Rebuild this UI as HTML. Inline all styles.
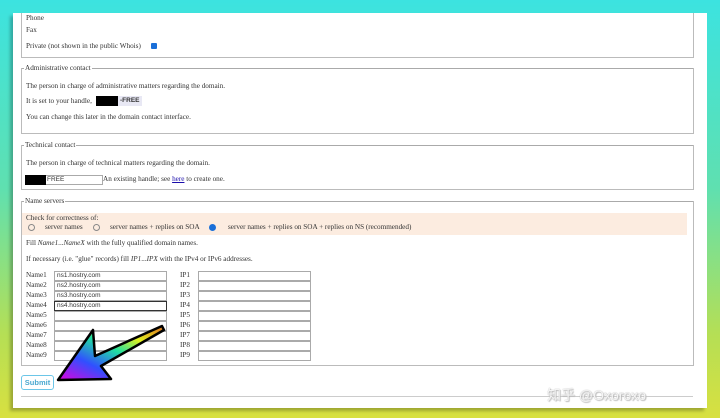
<!DOCTYPE html>
<html><head><style>
body{margin:0;width:720px;height:418px;overflow:hidden;background:linear-gradient(180deg,#3ce3e0 0%,#5fe0b0 45%,#b5df55 80%,#d8e040 100%);font-family:"Liberation Serif",serif;font-size:7.2px;color:#333;position:relative}
.panel{position:absolute;left:13px;top:13px;width:694px;height:395px;background:#fff;box-shadow:-3px 3px 3px rgba(0,0,0,.25)}
.a{position:absolute;white-space:nowrap}
.fs{position:absolute;left:21px;width:671px;border:1px solid #bbb;border-top:none}
.line{position:absolute;height:1px;background:#aaa}
.lg{position:absolute;background:#fff;padding:0 1px;left:24px}
.in{position:absolute;height:8px;border:1px solid #aaa;background:#fff;font-family:"Liberation Sans",sans-serif;font-size:6.5px;line-height:8px;padding-left:2px;box-sizing:content-box}
.rad{position:absolute;width:5px;height:5px;border:1px solid #888;border-radius:50%}
</style></head><body>
<div class="panel"></div>
<div class="fs" style="top:13px;height:44px"></div>
<div class="a" style="left:26px;top:14px">Phone</div>
<div class="a" style="left:26px;top:26px">Fax</div>
<div class="a" style="left:26px;top:42px">Private (not shown in the public Whois)</div>
<div class="a" style="left:151px;top:43px;width:6px;height:6px;background:#1a6fd8;border-radius:1px"></div>

<div class="line" style="left:21px;top:68px;width:672px"></div>
<div class="fs" style="top:68px;height:65px"></div>
<div class="lg" style="top:64px">Administrative contact</div>
<div class="a" style="left:26px;top:82px">The person in charge of administrative matters regarding the domain.</div>
<div class="a" style="left:26px;top:97px">It is set to your handle, </div>
<div class="a" style="left:96px;top:96px;width:22px;height:10px;background:#000"></div>
<div class="a" style="left:118px;top:96px;height:10px;background:#e8e8f4;font-family:'Liberation Sans',sans-serif;font-weight:bold;font-size:6.5px;line-height:10px;padding:0 2px;color:#333">-FREE</div>
<div class="a" style="left:26px;top:113px">You can change this later in the domain contact interface.</div>

<div class="line" style="left:21px;top:145px;width:672px"></div>
<div class="fs" style="top:145px;height:44px"></div>
<div class="lg" style="top:141px">Technical contact</div>
<div class="a" style="left:26px;top:159px">The person in charge of technical matters regarding the domain.</div>
<div class="in" style="left:25px;top:175px;width:74px">&nbsp;</div>
<div class="a" style="left:25px;top:175px;width:21px;height:10px;background:#000"></div>
<div class="a" style="left:47px;top:175px;font-family:'Liberation Sans',sans-serif;font-size:6.5px;line-height:10px">FREE</div>
<div class="a" style="left:103px;top:175px">An existing handle; see <span style="color:#1a0dab;text-decoration:underline">here</span> to create one.</div>

<div class="line" style="left:21px;top:201px;width:672px"></div>
<div class="fs" style="top:201px;height:164px"></div>
<div class="lg" style="top:197px">Name servers</div>
<div class="a" style="left:22px;top:213px;width:665px;height:22px;background:#fcece0"></div>
<div class="a" style="left:26px;top:214px">Check for correctness of:</div>
<div class="rad" style="left:28px;top:224px"></div>
<div class="a" style="left:45px;top:223px">server names</div>
<div class="rad" style="left:93px;top:224px"></div>
<div class="a" style="left:110px;top:223px">server names + replies on SOA</div>
<div class="rad" style="left:209px;top:224px;background:#1a6fd8;border-color:#1a6fd8"></div>
<div class="a" style="left:228px;top:223px">server names + replies on SOA + replies on NS (recommended)</div>
<div class="a" style="left:26px;top:239px">Fill <i>Name1</i>...<i>NameX</i> with the fully qualified domain names.</div>
<div class="a" style="left:26px;top:255px">If necessary (i.e. "glue" records) fill <i>IP1</i>...<i>IPX</i> with the IPv4 or IPv6 addresses.</div>

<div id="rows"></div>
<script>
var h='',v=['ns1.hostry.com','ns2.hostry.com','ns3.hostry.com','ns4.hostry.com','','','','',''];
for(var i=0;i<9;i++){var y=271+i*10;
h+='<div class="a" style="left:26px;top:'+y+'px">Name'+(i+1)+'</div>';
h+='<div class="in" style="left:54px;top:'+(y+0)+'px;width:109px;'+(i==3?'border-color:#333':'')+'">'+v[i]+'</div>';
h+='<div class="a" style="left:180px;top:'+y+'px">IP'+(i+1)+'</div>';
h+='<div class="in" style="left:198px;top:'+y+'px;width:109px"></div>';}
document.getElementById('rows').innerHTML=h;
</script>

<svg class="a" style="left:55px;top:322px" width="115" height="62" viewBox="0 0 115 62">
<defs><linearGradient id="g" x1="0" y1="1" x2="1" y2="0"><stop offset="0" stop-color="#e000e0"/><stop offset=".3" stop-color="#3050ff"/><stop offset=".55" stop-color="#20e0a0"/><stop offset=".75" stop-color="#e0f020"/><stop offset="1" stop-color="#e07020"/></linearGradient></defs>
<path d="M3 58 L38 8 L40 34 L107 4 L109 8 L46 44 L56 57 Z" fill="url(#g)" stroke="#000" stroke-width="2.5" stroke-linejoin="round"/>
</svg>

<div class="a" style="left:21px;top:375px;width:31px;height:13px;border:1.5px solid #6cc6e8;border-radius:3px;font-family:'Liberation Sans',sans-serif;font-size:7.5px;font-weight:bold;color:#4aa8d0;line-height:13px;text-align:center">Submit</div>
<div class="line" style="left:21px;top:396px;width:672px;background:#ccc"></div>
<div class="a" style="left:547px;top:385px;font-family:'Liberation Sans','Noto Sans CJK SC',sans-serif;font-size:14px;color:#f4f4f4;text-shadow:0 0 1px #aaa,1px 1px 1px #bbb">知乎 @Oxoroxo</div>
</body></html>
